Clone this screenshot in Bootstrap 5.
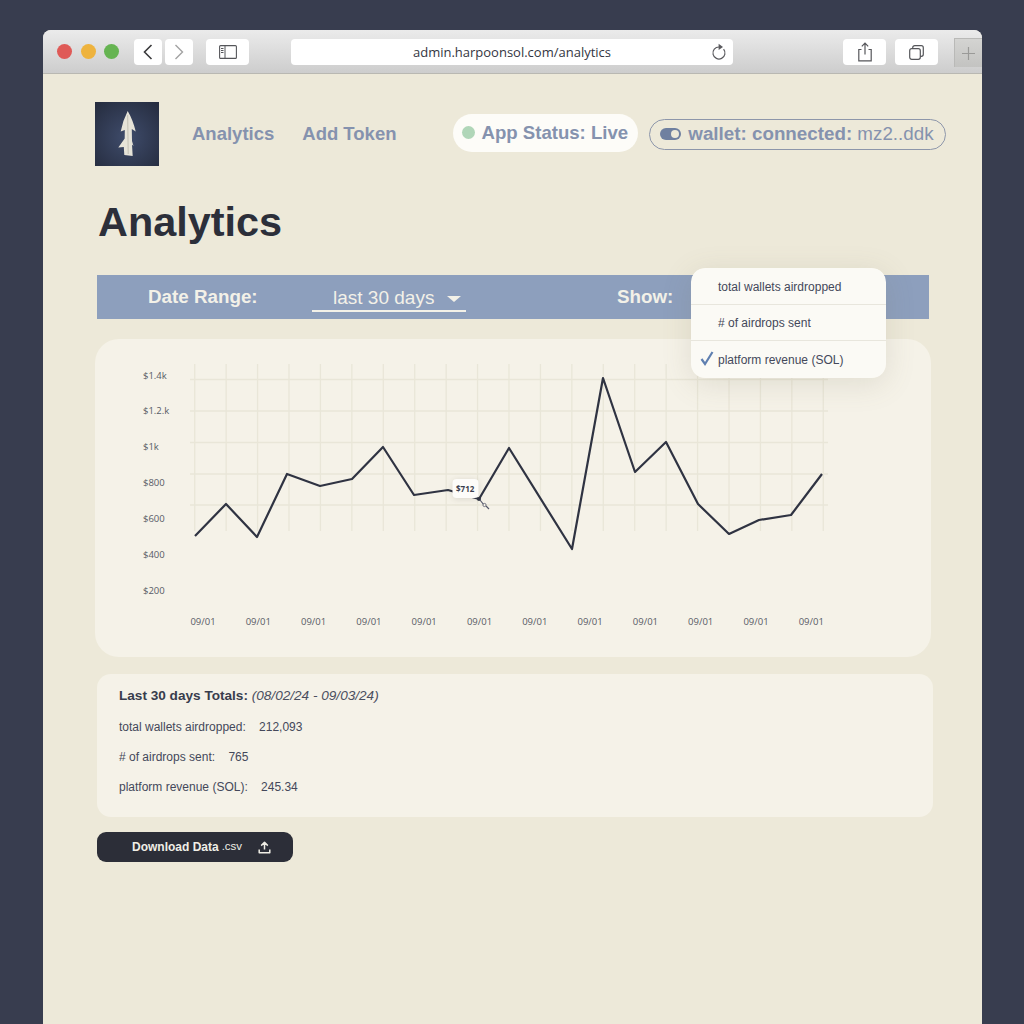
<!DOCTYPE html>
<html lang="en">

<head>
    <meta charset="UTF-8">
    <meta name="viewport" content="width=device-width, initial-scale=1.0">
    <title>Analytics</title>
    <link href="https://cdn.jsdelivr.net/npm/bootstrap@5.3.0/dist/css/bootstrap.min.css" rel="stylesheet">
    <style>
        html, body {
            height: 100%;
            overflow: hidden;
        }

        body {
            background-color: #383d4f;
            padding: 30px 42px 0 43px;
            font-family: 'Liberation Sans', Arial, sans-serif;
        }

        .browser-window {
            height: 100%;
            background-color: #ede9d9;
            border-radius: 8px 8px 0 0;
            overflow: hidden;
        }

        /* browser toolbar */
        .chrome-bar {
            height: 44px;
            padding-top: 9px;
            padding-left: 14px;
            background: linear-gradient(#ebebeb, #cdcdcd);
            border-bottom: 1px solid #b9b8b2;
        }

        .traffic-dot {
            width: 15px;
            height: 15px;
            border-radius: 50%;
            margin-top: 5px;
            margin-right: 8.5px;
        }

        .dot-red { background-color: #df5a57; }
        .dot-amber { background-color: #eeb33e; }
        .dot-green { background-color: #66b452; }

        .chrome-btn {
            height: 26px;
            background-color: #fff;
            border-radius: 4px;
        }

        .btn-back { width: 28px; margin-left: 6.5px; }
        .btn-forward { width: 28px; margin-left: 3px; }
        .btn-sidebar { width: 43px; margin-left: 13px; }
        .btn-share { width: 43px; }
        .btn-tabs { width: 43px; margin-left: 9px; }

        .url-box {
            width: 442px;
            margin-left: 42px;
            margin-right: 110px;
            padding-top: 1px;
            font-family: 'Open Sans', sans-serif;
            font-size: 13px;
            color: #33363f;
            position: relative;
        }

        .url-reload {
            position: absolute;
            right: 6px;
            top: 4px;
        }

        .new-tab {
            width: 28px;
            height: 29px;
            margin-top: -1px;
            margin-left: 16px;
            background: linear-gradient(#d4d4d2, #c3c3c1);
            border-left: 1px solid #b9b9b7;
            border-top: 1px solid #b9b9b7;
        }

        /* page */
        .page-body {
            padding: 28px 49px 0 54px;
        }

        .top-nav {
            height: 64px;
            margin-left: -2px;
            margin-right: -13px;
            white-space: nowrap;
        }

        .logo-box {
            width: 64px;
            height: 64px;
            margin-right: 33px;
        }

        .nav-text {
            font-size: 18.5px;
            font-weight: 700;
            color: #8592ae;
            text-decoration: none;
            margin-right: 28px;
        }

        .status-pill {
            width: 185px;
            height: 38px;
            margin-left: 29px;
            margin-top: -3px;
            padding-left: 9px;
            background-color: #fdfcf8;
            border-radius: 19px;
            font-size: 18.6px;
            font-weight: 700;
            color: #8592ae;
        }

        .status-dot {
            width: 13px;
            height: 13px;
            border-radius: 50%;
            background-color: #b0d6b8;
            margin-right: 6px;
        }

        .wallet-pill {
            width: 297px;
            height: 31px;
            margin-left: 11px;
            padding-left: 10px;
            border: 1.5px solid #8d96aa;
            border-radius: 16px;
            font-size: 18.8px;
            color: #8592ae;
        }

        .wallet-toggle {
            width: 21px;
            height: 12px;
            border-radius: 6px;
            background-color: #6f80a0;
            position: relative;
            margin-right: 7px;
        }

        .wallet-toggle::after {
            content: "";
            position: absolute;
            right: 2px;
            top: 2px;
            width: 8px;
            height: 8px;
            border-radius: 50%;
            background-color: #ede9d9;
        }

        .page-title {
            font-family: 'Liberation Sans', Arial, sans-serif;
            font-size: 41.4px;
            font-weight: 700;
            color: #2c2f3a;
            margin: 32px 0 29px 1px;
            line-height: 48px;
        }

        .filter-bar {
            height: 44px;
            margin-right: 4px;
            padding-left: 51px;
            background-color: #8d9fbd;
            color: #f3f1e8;
            font-size: 18.8px;
            position: relative;
            z-index: 2;
        }

        .filter-label {
            font-weight: 700;
            width: 164px;
        }

        .range-select {
            width: 154px;
            height: 26px;
            padding-left: 21px;
            line-height: 24px;
            border-bottom: 2px solid #f3f1e8;
            margin-top: 4px;
            margin-right: 151px;
            font-size: 19px;
        }

        .range-caret {
            position: absolute;
            right: 5px;
            top: 10px;
            width: 0;
            height: 0;
            border-left: 7px solid transparent;
            border-right: 7px solid transparent;
            border-top: 6px solid #f3f1e8;
        }

        .show-menu {
            position: absolute;
            left: 594px;
            top: -7px;
            width: 195px;
            border-radius: 14px;
            overflow: hidden;
            box-shadow: 0 6px 30px rgba(120, 115, 90, 0.16);
            font-size: 12px;
        }

        .show-menu .list-group-item {
            height: 36.5px;
            padding: 2px 0 0 27px;
            display: flex;
            align-items: center;
            background-color: #fbfaf5;
            border-color: #e8e6dd;
            color: #44485a;
            position: relative;
        }

        .show-check {
            position: absolute;
            left: 9px;
            top: 10px;
        }

        .chart-panel {
            height: 318px;
            margin: 20px 2px 0 -2px;
            background-color: #f5f2e8;
            border-radius: 24px;
            border: none;
        }

        .chart-panel svg {
            display: block;
        }

        .chart-panel text {
            font-family: 'Open Sans', sans-serif;
            font-size: 9.5px;
            fill: #585b66;
        }

        .chart-panel .tip-text {
            font-size: 8px;
            font-weight: 700;
            fill: #3a3e4e;
        }

        .tip-box {
            filter: drop-shadow(0 1px 3px rgba(90, 85, 70, 0.18));
        }

        .totals-panel {
            height: 143px;
            margin-top: 17px;
            padding: 14px 22px;
            background-color: #f5f2e8;
            border-radius: 14px;
            border: none;
            color: #44485a;
            font-size: 12px;
        }

        .totals-title {
            font-size: 13.6px;
            line-height: 16px;
            margin-bottom: 8px;
            color: #383c4c;
        }

        .totals-title i {
            font-weight: 400;
            color: #4a4e5e;
        }

        .totals-row {
            line-height: 30px;
        }

        .totals-row span {
            margin-left: 10px;
        }

        .download-btn {
            width: 196px;
            height: 30px;
            margin-top: 15px;
            padding: 0 0 0 35px;
            display: flex;
            align-items: center;
            background-color: #2c2e38;
            border: none;
            border-radius: 9px;
            color: #f0eee6;
            font-size: 12px;
            font-weight: 700;
        }

        .download-btn small {
            font-size: 11.5px;
            font-weight: 400;
            margin-left: 3px;
            margin-right: 16px;
        }
    </style>
</head>

<body>
    <div class="browser-window d-flex flex-column">
        <div class="chrome-bar d-flex flex-shrink-0">
            <div class="traffic-dot dot-red"></div>
            <div class="traffic-dot dot-amber"></div>
            <div class="traffic-dot dot-green"></div>
            <div class="chrome-btn btn-back d-flex align-items-center justify-content-center">
                <svg width="12" height="18" viewBox="0 0 12 18"><path d="M9.5 2 L2.5 9 L9.5 16" fill="none" stroke="#3a3a3c" stroke-width="1.6"/></svg>
            </div>
            <div class="chrome-btn btn-forward d-flex align-items-center justify-content-center">
                <svg width="12" height="18" viewBox="0 0 12 18"><path d="M2.5 2 L9.5 9 L2.5 16" fill="none" stroke="#a2a2a2" stroke-width="1.4"/></svg>
            </div>
            <div class="chrome-btn btn-sidebar d-flex align-items-center justify-content-center">
                <svg width="18" height="14" viewBox="0 0 18 14"><rect x="0.6" y="0.6" width="16.8" height="12.8" rx="1" fill="none" stroke="#55565a" stroke-width="1.1"/><path d="M6 0.6 V13.4 M2 3.5 H4.5 M2 5.5 H4.5 M2 7.5 H4.5" fill="none" stroke="#55565a" stroke-width="1"/></svg>
            </div>
            <div class="chrome-btn url-box d-flex align-items-center justify-content-center">
                admin.harpoonsol.com/analytics
                <svg class="url-reload" width="16" height="18" viewBox="0 0 16 18"><path d="M12.6 6.2 A6 6 0 1 1 8 4" fill="none" stroke="#5a5a5e" stroke-width="1.2"/><path d="M7.6 0.8 L12 4 L7.6 7 Z" fill="#5a5a5e"/></svg>
            </div>
            <div class="chrome-btn btn-share d-flex align-items-center justify-content-center">
                <svg width="16" height="20" viewBox="0 0 16 20"><path d="M4.5 7.5 H1.8 V18.8 H14.2 V7.5 H11.5 M8 12.5 V1.5 M4.8 4.4 L8 1.2 L11.2 4.4" fill="none" stroke="#55565a" stroke-width="1.2"/></svg>
            </div>
            <div class="chrome-btn btn-tabs d-flex align-items-center justify-content-center">
                <svg width="15" height="15" viewBox="0 0 15 15"><rect x="0.7" y="3.7" width="10.6" height="10.6" rx="2" fill="none" stroke="#55565a" stroke-width="1.2"/><path d="M3.7 3.7 V2.7 A2 2 0 0 1 5.7 0.7 H12.3 A2 2 0 0 1 14.3 2.7 V9.3 A2 2 0 0 1 12.3 11.3 H11.3" fill="none" stroke="#55565a" stroke-width="1.2"/></svg>
            </div>
            <div class="new-tab d-flex align-items-center justify-content-center">
                <svg width="13" height="13" viewBox="0 0 13 13"><path d="M6.5 0 V13 M0 6.5 H13" stroke="#9a9a98" stroke-width="1.2"/></svg>
            </div>
        </div>

        <div class="page-body flex-grow-1">
            <nav class="top-nav d-flex align-items-center">
                <svg class="logo-box flex-shrink-0" viewBox="0 0 64 64">
                    <defs>
                        <radialGradient id="logoBg" cx="0.5" cy="0.55" r="0.7">
                            <stop offset="0" stop-color="#3f4c6b"/>
                            <stop offset="1" stop-color="#262d40"/>
                        </radialGradient>
                    </defs>
                    <rect width="64" height="64" fill="url(#logoBg)"/>
                    <path d="M32.7 9 Q38 18 40.7 29.5 L36.8 27 L37 39 L38.5 44 L37 42.5 L37.7 54 L29.3 53 L28.8 45 L23.3 45.5 L29.7 36.5 L29.8 28 L25.7 29.5 Q28 18 32.7 9 Z" fill="#e6e3d8"/>
                    <path d="M32.7 13 L33.2 52" stroke="#b9b6aa" stroke-width="0.8" fill="none"/>
                </svg>
                <a class="nav-text" href="#">Analytics</a>
                <a class="nav-text" href="#">Add Token</a>
                <div class="status-pill d-flex align-items-center"><span class="status-dot"></span>App Status: Live</div>
                <div class="wallet-pill d-flex align-items-center"><span class="wallet-toggle"></span><b>wallet: connected:</b>&nbsp;mz2..ddk</div>
            </nav>

            <h1 class="page-title">Analytics</h1>

            <div class="filter-bar d-flex align-items-center">
                <div class="filter-label">Date Range:</div>
                <div class="range-select position-relative">last 30 days<span class="range-caret"></span></div>
                <div class="filter-label">Show:</div>
                <div class="show-menu list-group list-group-flush">
                    <div class="list-group-item">total wallets airdropped</div>
                    <div class="list-group-item"># of airdrops sent</div>
                    <div class="list-group-item">
                        <svg class="show-check" width="14" height="15" viewBox="0 0 14 15"><path d="M1.5 8 L5 13 L12.5 1" fill="none" stroke="#5f7fb0" stroke-width="2.2"/></svg>
                        platform revenue (SOL)
                    </div>
                </div>
            </div>

            <div class="card chart-panel" id="chartPanel"></div>

            <div class="card totals-panel">
                <div class="totals-title"><b>Last 30 days Totals:</b> <i>(08/02/24 - 09/03/24)</i></div>
                <div class="totals-row">total wallets airdropped: <span>212,093</span></div>
                <div class="totals-row"># of airdrops sent: <span>765</span></div>
                <div class="totals-row">platform revenue (SOL): <span>245.34</span></div>
            </div>

            <button class="btn download-btn" type="button">
                Download Data <small>.csv</small>
                <svg width="13" height="13" viewBox="0 0 13 13"><path d="M6.5 8.5 V1.5 M3.2 4.6 L6.5 1.3 L9.8 4.6 M1.2 8.5 V11.8 H11.8 V8.5" fill="none" stroke="#f0eee6" stroke-width="1.5" stroke-linejoin="round"/></svg>
            </button>
        </div>
    </div>

    <script src="https://cdn.jsdelivr.net/npm/bootstrap@5.3.0/dist/js/bootstrap.bundle.min.js"></script>
    <script>
        // chart points, in page coordinates measured off the design
        const points = [[195, 536], [226, 504], [257, 537], [287, 474], [320, 486], [352, 479], [383, 447], [414, 495],
            [448, 490], [479, 499], [509, 448], [572, 549], [603, 378], [635, 472], [666, 442], [698, 504],
            [729, 534], [759, 520], [791, 515], [822, 474]];
        const yLabels = ['$1.4k', '$1.2.k', '$1k', '$800', '$600', '$400', '$200'];

        let grid = '';
        for (let i = 0; i < 21; i++) {
            const x = 194.7 + i * 31.43;
            grid += `<line x1="${x}" y1="364" x2="${x}" y2="531" />`;
        }
        [379.5, 411, 442.5, 474, 505].forEach(y => {
            grid += `<line x1="190" y1="${y}" x2="828" y2="${y}" />`;
        });

        let labels = '';
        yLabels.forEach((text, i) => {
            labels += `<text x="143" y="${378.5 + i * 35.9}">${text}</text>`;
        });
        for (let i = 0; i < 12; i++) {
            labels += `<text x="${203 + i * 55.3}" y="625" text-anchor="middle">09/01</text>`;
        }

        document.getElementById('chartPanel').innerHTML = `
            <svg width="836" height="318" viewBox="95 339 836 318">
                <g stroke="#e9e6d8" stroke-width="1.3">${grid}</g>
                ${labels}
                <polyline points="${points.join(' ')}" fill="none" stroke="#2f3342" stroke-width="2.2" stroke-linejoin="round" />
                <rect class="tip-box" x="452.5" y="479" width="26" height="19" rx="4" fill="#fdfcf9" />
                <text class="tip-text" x="456" y="491.5">$712</text>
                <circle cx="479" cy="499" r="2" fill="#2f3342" />
                <path d="M480 500 L484 505 M486 506 L489 509" stroke="#55586a" stroke-width="1.2" />
                <circle cx="484.5" cy="505" r="1.6" fill="#f5f2e8" stroke="#55586a" stroke-width="0.8" />
            </svg>`;
    </script>
</body>

</html>
